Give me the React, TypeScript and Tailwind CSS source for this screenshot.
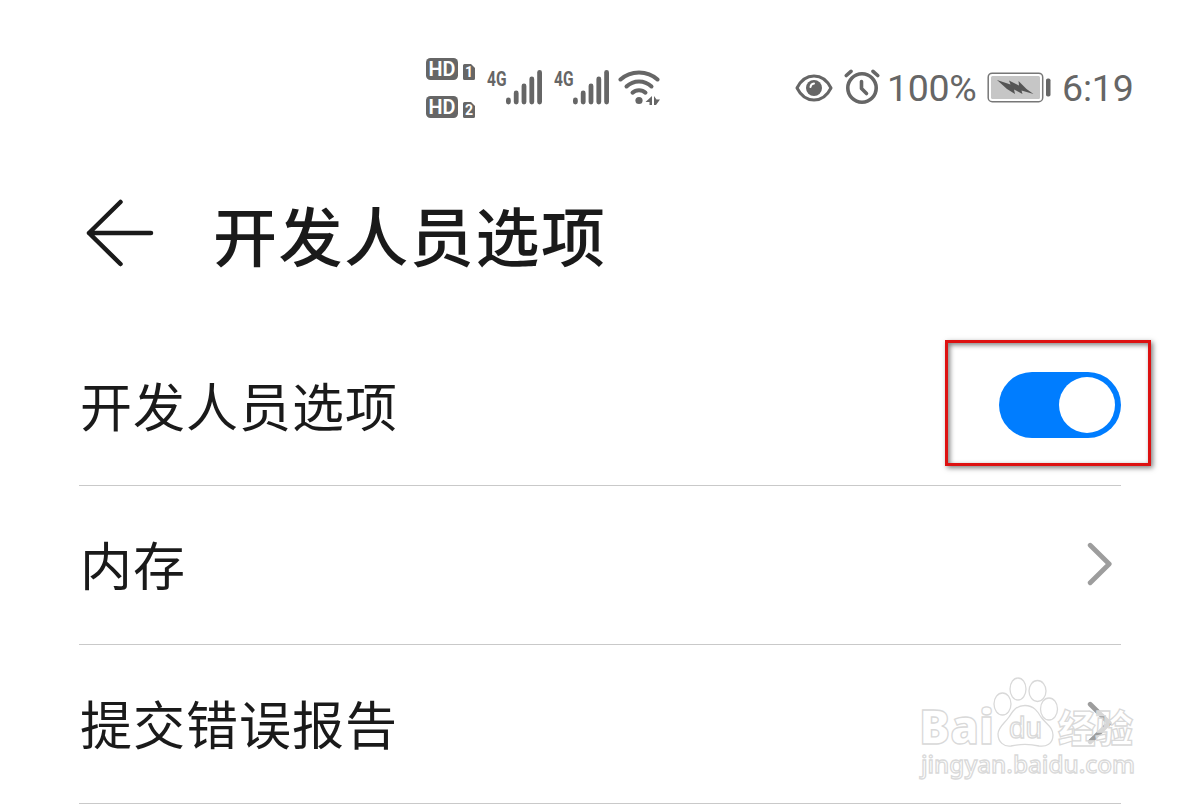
import React from "react";

function HdBadge({ sim }: { sim: string }) {
  return (
    <svg width="50" height="24" viewBox="0 0 50 24" fill="#666">
      <rect x="1" y="1" width="32" height="22" rx="4.5" />
      <text
        x="17"
        y="19"
        textAnchor="middle"
        textLength="27"
        lengthAdjust="spacingAndGlyphs"
        className="fill-white font-['Roboto',sans-serif] text-[20px] font-semibold"
      >
        HD
      </text>
      <path d="M39.5 7H46l4 4v10.5a1.5 1.5 0 0 1-1.5 1.5h-9a1.5 1.5 0 0 1-1.5-1.5v-13A1.5 1.5 0 0 1 39.5 7z" />
      <text
        x="44"
        y="20.2"
        textAnchor="middle"
        className="fill-white font-['Roboto',sans-serif] text-[14px] font-bold"
      >
        {sim}
      </text>
    </svg>
  );
}

function Signal() {
  return (
    <svg className="overflow-visible" width="56" height="36" viewBox="0 0 56 36" fill="#666">
      <text
        x="0"
        y="15.5"
        textLength="19.5"
        lengthAdjust="spacingAndGlyphs"
        className="font-['Roboto',sans-serif] text-[21px] font-bold"
      >
        4G
      </text>
      <rect x="19" y="27.5" width="4.8" height="7" rx="2.4" />
      <rect x="26.8" y="20.5" width="4.8" height="14" rx="2.4" />
      <rect x="34.6" y="13.5" width="4.8" height="21" rx="2.4" />
      <rect x="42.4" y="6.5" width="4.8" height="28" rx="2.4" />
      <rect x="50.2" y="0" width="4.8" height="34.5" rx="2.4" />
    </svg>
  );
}

function Wifi() {
  return (
    <svg
      width="42"
      height="36"
      viewBox="0 0 42 36"
      fill="none"
      stroke="#666"
      strokeWidth="4"
      strokeLinecap="round"
    >
      <path d="M2.5 9.5C12.5 0 29.5 0 39.5 9.5" />
      <path d="M8.5 16.5C15.5 9.7 26.5 9.7 33.5 16.5" />
      <path d="M14.5 22.7C18 19.3 24 19.3 27.5 22.7" />
      <circle cx="21" cy="30.5" r="3.6" fill="#666" stroke="none" />
      <path d="M34 26V35H31.500V32H27.5zM36 26L38.500 29.500H42L38 35H36z" fill="#666" stroke="none" />
    </svg>
  );
}

function Eye() {
  return (
    <svg width="38" height="28" viewBox="0 0 38 28">
      <path
        d="M2 14C10-2 28-2 36 14C28 30 10 30 2 14z"
        fill="none"
        stroke="#666"
        strokeWidth="3"
        strokeLinejoin="round"
      />
      <circle cx="19" cy="14" r="8" fill="#666" />
      <path d="M15.5 13a4 4 0 0 1 3.5-3.5" fill="none" stroke="#fff" strokeWidth="2" strokeLinecap="round" />
    </svg>
  );
}

function Alarm() {
  return (
    <svg
      width="36"
      height="36"
      viewBox="0 0 36 36"
      fill="none"
      stroke="#666"
      strokeWidth="3.6"
      strokeLinecap="round"
      strokeLinejoin="round"
    >
      <circle cx="18" cy="19" r="14.2" />
      <path d="M17.5 12.5V19.5L22.5 24.5" />
      <path d="M2.3 6.5L7 2.3M29 2.3L33.7 6.5" />
    </svg>
  );
}

function Battery() {
  return (
    <svg width="64" height="32" viewBox="0 0 64 32">
      <rect x="1.2" y="1.2" width="54.5" height="28.5" rx="4" fill="#fff" stroke="#777" strokeWidth="1.5" />
      <rect x="4" y="4" width="49" height="23" rx="1.5" fill="#c6c6c6" />
      <path
        d="M10 8L23.5 12.5L22 8.5L32 13.500L31.500 9L39.5 17L46.5 22L34.5 18.5L35.5 22L27 17.500L28 22L20 17z"
        fill="#555"
      />
      <rect x="59" y="6.5" width="4.5" height="18" rx="1.8" fill="#666" />
    </svg>
  );
}

function Chevron() {
  return (
    <svg
      width="26"
      height="44"
      viewBox="0 0 26 44"
      fill="none"
      stroke="#9d9d9d"
      strokeWidth="4.8"
      strokeLinecap="round"
      strokeLinejoin="round"
    >
      <path d="M3.2 3.2L22.2 22L3.2 40.8" />
    </svg>
  );
}

function Toggle() {
  return (
    <div className="flex h-[66px] w-[122px] items-center justify-end rounded-full bg-[#007dff] pr-[6px]">
      <div className="size-[56px] rounded-full bg-white" />
    </div>
  );
}

function Row({ label, children }: { label: string; children: React.ReactNode }) {
  return (
    <li className="flex h-[159px] items-center justify-between border-b border-[#c9c9c9] pb-[2px]">
      <span className="pl-[1px] text-[52px] leading-none tracking-[1px]">{label}</span>
      {children}
    </li>
  );
}

function Watermark() {
  return (
    <svg
      className="absolute left-[910px] top-[670px]"
      width="240"
      height="120"
      viewBox="0 0 240 120"
      fill="#fff"
      fillOpacity="0.6"
      stroke="#d9d9d9"
      strokeWidth="1.3"
    >
      <text
        x="9"
        y="74"
        textLength="75"
        lengthAdjust="spacingAndGlyphs"
        className="font-['Open_Sans',sans-serif] text-[48px] font-extrabold"
      >
        Bai
      </text>
      <ellipse cx="92.5" cy="34" rx="8.5" ry="11" />
      <ellipse cx="108" cy="19" rx="8" ry="11" />
      <ellipse cx="127.5" cy="21" rx="8.5" ry="10.5" />
      <ellipse cx="139" cy="39" rx="8.5" ry="11" />
      <path d="M115 35.5C124 35.5 128 42 131 47C136 54 143 57 143 65C143 74 136 77 129 76C120 74 110 74 101 76C94 77 88 72 88 64C88 57 95 53 99 47C103 41 106 35.5 115 35.5z" />
      <text
        x="99"
        y="68"
        textLength="33"
        lengthAdjust="spacingAndGlyphs"
        className="font-['Liberation_Sans',sans-serif] text-[29px]"
      >
        du
      </text>
      <text
        x="148"
        y="72"
        textLength="75"
        lengthAdjust="spacingAndGlyphs"
        className="font-['Noto_Sans_CJK_SC',sans-serif] text-[38px] font-black"
      >
        经验
      </text>
      <text
        x="11"
        y="103"
        textLength="214"
        lengthAdjust="spacingAndGlyphs"
        className="font-['Noto_Sans',sans-serif] text-[24px] font-medium"
      >
        jingyan.baidu.com
      </text>
    </svg>
  );
}

export default function App() {
  return (
    <div className="relative h-[806px] w-[1200px] overflow-hidden bg-white font-['Noto_Sans_CJK_SC',sans-serif] text-[#1a1a1a]">
      <header className="flex h-[176px] items-start pl-[425px] pt-[57px] font-['Roboto',sans-serif] text-[#666]">
        <div className="flex flex-col gap-[14px]">
          <HdBadge sim="1" />
          <HdBadge sim="2" />
        </div>
        <div className="ml-[12px] mt-[13px] flex gap-[11px]">
          <Signal />
          <Signal />
        </div>
        <div className="ml-[8px] mt-[13px]">
          <Wifi />
        </div>
        <div className="ml-[135px] mt-[17px]">
          <Eye />
        </div>
        <div className="ml-[11px] mt-[12px]">
          <Alarm />
        </div>
        <span className="ml-[7px] mt-[12px] w-[90px] text-[37.5px] leading-[38px] tracking-[-0.3px]">100%</span>
        <div className="ml-[10px] mt-[15px]">
          <Battery />
        </div>
        <span className="ml-[11px] mt-[12px] text-[37.5px] leading-[38px] tracking-[-0.2px]">6:19</span>
      </header>

      <div className="flex h-[151px] items-start pl-[86px]">
        <svg
          className="mt-[23px]"
          width="68"
          height="68"
          viewBox="0 0 68 68"
          fill="none"
          stroke="#1a1a1a"
          strokeWidth="4.5"
          strokeLinecap="round"
          strokeLinejoin="round"
        >
          <path d="M34.5 3L3 34L34.5 65M3 34H65" />
        </svg>
        <h1 className="ml-[59px] mt-[25px] text-[64px] font-medium leading-none tracking-[1.6px]">
          开发人员选项
        </h1>
      </div>

      <ul className="ml-[79px] w-[1042px]">
        <Row label="开发人员选项">
          <Toggle />
        </Row>
        <Row label="内存">
          <div className="mr-[8px]">
            <Chevron />
          </div>
        </Row>
        <Row label="提交错误报告">
          <div className="mr-[8px]">
            <Chevron />
          </div>
        </Row>
      </ul>

      {/* highlight around the switch */}
      <div className="absolute left-[945px] top-[340px] h-[126px] w-[206px] border-[3px] border-[#dd1111] shadow-[2px_2px_5px_rgba(0,0,0,0.5),inset_2px_2px_5px_rgba(0,0,0,0.5)]" />
      <Watermark />
    </div>
  );
}
